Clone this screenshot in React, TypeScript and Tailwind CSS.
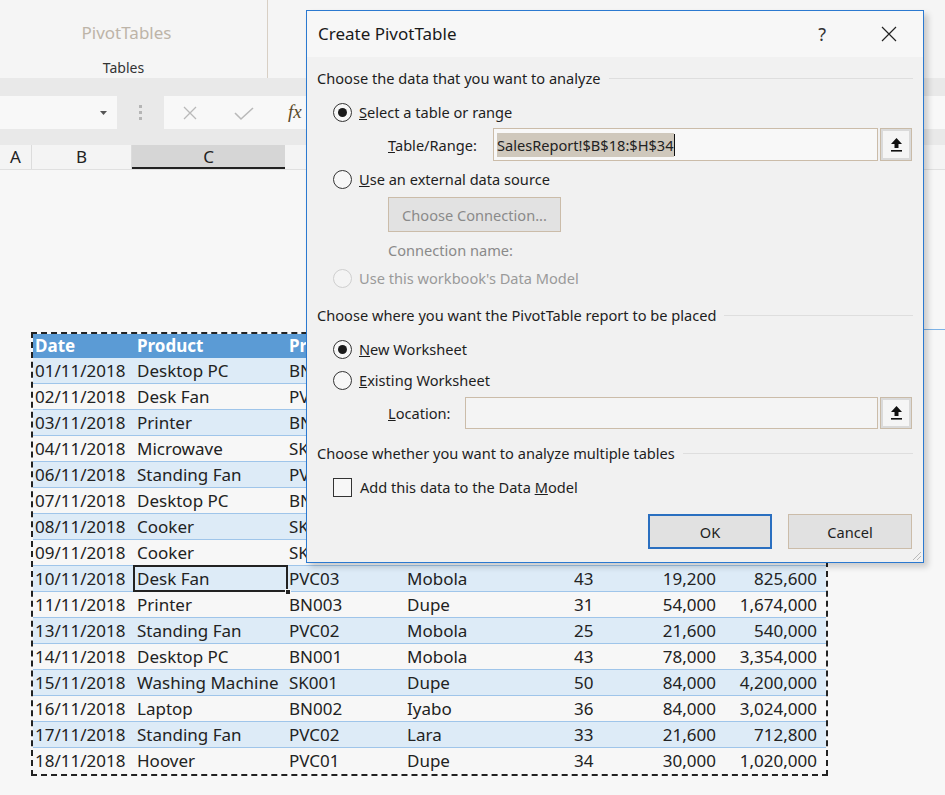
import React from 'react';

type Row = {
    date: string;
    product: string;
    id: string;
    seller: string;
    qty: number;
    price: string;
    total: string;
};

const rows: Row[] = [
    { date: '01/11/2018', product: 'Desktop PC', id: 'BN001', seller: 'Iyabo', qty: 12, price: '78,000', total: '936,000' },
    { date: '02/11/2018', product: 'Desk Fan', id: 'PVC03', seller: 'Lara', qty: 20, price: '19,200', total: '384,000' },
    { date: '03/11/2018', product: 'Printer', id: 'BN003', seller: 'Dupe', qty: 15, price: '54,000', total: '810,000' },
    { date: '04/11/2018', product: 'Microwave', id: 'SK002', seller: 'Mobola', qty: 18, price: '36,000', total: '648,000' },
    { date: '06/11/2018', product: 'Standing Fan', id: 'PVC02', seller: 'Iyabo', qty: 22, price: '21,600', total: '475,200' },
    { date: '07/11/2018', product: 'Desktop PC', id: 'BN001', seller: 'Lara', qty: 10, price: '78,000', total: '780,000' },
    { date: '08/11/2018', product: 'Cooker', id: 'SK003', seller: 'Dupe', qty: 14, price: '60,000', total: '840,000' },
    { date: '09/11/2018', product: 'Cooker', id: 'SK003', seller: 'Mobola', qty: 9, price: '60,000', total: '540,000' },
    { date: '10/11/2018', product: 'Desk Fan', id: 'PVC03', seller: 'Mobola', qty: 43, price: '19,200', total: '825,600' },
    { date: '11/11/2018', product: 'Printer', id: 'BN003', seller: 'Dupe', qty: 31, price: '54,000', total: '1,674,000' },
    { date: '13/11/2018', product: 'Standing Fan', id: 'PVC02', seller: 'Mobola', qty: 25, price: '21,600', total: '540,000' },
    { date: '14/11/2018', product: 'Desktop PC', id: 'BN001', seller: 'Mobola', qty: 43, price: '78,000', total: '3,354,000' },
    { date: '15/11/2018', product: 'Washing Machine', id: 'SK001', seller: 'Dupe', qty: 50, price: '84,000', total: '4,200,000' },
    { date: '16/11/2018', product: 'Laptop', id: 'BN002', seller: 'Iyabo', qty: 36, price: '84,000', total: '3,024,000' },
    { date: '17/11/2018', product: 'Standing Fan', id: 'PVC02', seller: 'Lara', qty: 33, price: '21,600', total: '712,800' },
    { date: '18/11/2018', product: 'Hoover', id: 'PVC01', seller: 'Dupe', qty: 34, price: '30,000', total: '1,020,000' },
];

// rows above this index sit behind the dialog from the Seller column on
const COVERED = 8;

const Radio: React.FC<{ checked?: boolean; disabled?: boolean }> = ({ checked, disabled }) => (
    <span
        className={`w-[19px] h-[19px] rounded-full border flex items-center justify-center shrink-0 ${disabled ? 'border-[#cfcfcf] bg-[#f4f4f4]' : 'border-[#333] bg-[#f7f7f7]'}`}
    >
        {checked && <span className="w-[9px] h-[9px] rounded-full bg-[#1a1a1a]" />}
    </span>
);

const PickButton: React.FC = () => (
    <div className="w-[32px] h-full border border-[#c9bba8] bg-[#dadada] p-[2px] shrink-0">
        <div className="w-full h-full bg-[#f5f5f5] flex items-center justify-center">
            <svg width="13" height="16" viewBox="0 0 13 16">
                <path d="M6.5 1 L12 7 H8.5 V11 H4.5 V7 H1 Z" fill="#111" />
                <rect x="1" y="13" width="11" height="1.6" fill="#111" />
            </svg>
        </div>
    </div>
);

const Heading: React.FC<{ text: string; className?: string }> = ({ text, className }) => (
    <div className={`flex items-center h-[24px] ${className ?? ''}`}>
        <span className="whitespace-nowrap">{text}</span>
        <div className="flex-1 h-px bg-[#dedede] ml-2 mr-[10px]" />
    </div>
);

const App: React.FC = () => {
    return (
        <div className="relative w-[945px] h-[795px] overflow-hidden bg-[#f7f7f7] text-[#222] font-['Noto_Sans',sans-serif]">
            {/* ribbon */}
            <div className="flex h-[78px] bg-[#f5f5f5]">
                <div className="w-[268px] flex flex-col items-center border-r border-[#d8cfc4]">
                    <span className="mt-[20px] ml-[-14px] text-[17px] text-[#bdb4a8] leading-[26px]">PivotTables</span>
                    <span className="mt-[12px] ml-[-20px] text-[14px] text-[#333] leading-[20px]">Tables</span>
                </div>
            </div>

            {/* formula bar */}
            <div className="h-[67px] bg-[#e9e9e9] pt-[18px]">
                <div className="flex items-center h-[33px]">
                    <div className="w-[117px] h-full bg-[#f8f8f8] flex items-center justify-end pr-[10px]">
                        <svg width="7" height="4" viewBox="0 0 7 4">
                            <path d="M0 0 H7 L3.5 4 Z" fill="#555" />
                        </svg>
                    </div>
                    <div className="w-[47px] flex flex-col items-center gap-[3px]">
                        <span className="w-[3px] h-[3px] bg-[#b5b5b5]" />
                        <span className="w-[3px] h-[3px] bg-[#b5b5b5]" />
                        <span className="w-[3px] h-[3px] bg-[#b5b5b5]" />
                    </div>
                    <div className="flex-1 h-full bg-[#f8f8f8] flex items-center">
                        <svg className="ml-[18px]" width="16" height="16" viewBox="0 0 16 16">
                            <path d="M2 2 L14 14 M14 2 L2 14" stroke="#b9b9b9" strokeWidth="1.3" />
                        </svg>
                        <svg className="ml-[36px]" width="20" height="16" viewBox="0 0 20 16">
                            <path d="M1 8 L7 14 L19 3" stroke="#b9b9b9" strokeWidth="1.6" fill="none" />
                        </svg>
                        <span className="ml-[34px] text-[19px] italic font-['Liberation_Serif',serif] text-[#5a4a2a]">fx</span>
                    </div>
                </div>
            </div>

            {/* column headers */}
            <div className="flex h-[25px] bg-[#f4f4f4] text-[17px] leading-[24px] border-b border-[#e0e0e0]">
                <div className="w-[32px] border-r border-[#dcdcdc] text-center">A</div>
                <div className="w-[100px] border-r border-[#dcdcdc] text-center">B</div>
                <div className="w-[153px] bg-[#d6d6d6] border-b-2 border-[#222] text-center">C</div>
                <div className="flex-1" />
            </div>

            {/* sheet */}
            <div className="relative">
                <div className="h-[162px] flex justify-end">
                    <div className="w-[22px] mt-[159px] h-px bg-[#7db2e6]" />
                </div>
                <div className="ml-[31px] w-[797px] border-2 border-dashed border-[#222] text-[17px] leading-[26px]">
                    <div className="flex h-[24px] items-center bg-[#5b9bd5] text-white font-bold leading-[22px]">
                        <div className="w-[101px] pl-[2px]">Date</div>
                        <div className="w-[153px] pl-[3px]">Product</div>
                        <div className="w-[116px] pl-[2px]">
                            <div className="w-[17px] overflow-hidden whitespace-nowrap">Product ID</div>
                        </div>
                        <div className="flex-1" />
                    </div>
                    {rows.map((r, i) => (
                        <div
                            key={r.date}
                            className={`flex h-[26px] items-center border-b border-[#9fc5ea] ${i % 2 === 0 ? 'bg-[#ddebf7]' : 'bg-[#f7f7f7]'} ${i === rows.length - 1 ? 'border-b-0' : ''}`}
                        >
                            <div className="w-[101px] pl-[2px] whitespace-nowrap">{r.date}</div>
                            <div className={`relative w-[153px] h-full pl-[3px] whitespace-nowrap ${i === 8 ? 'outline-2 outline-[#222] -outline-offset-1' : ''}`}>
                                {r.product}
                                {i === 8 && <span className="absolute right-[-4px] bottom-[-4px] w-[6px] h-[6px] bg-[#222] border border-[#f7f7f7]" />}
                            </div>
                            <div className="w-[116px] pl-[2px] overflow-hidden whitespace-nowrap">{i < COVERED ? r.id.slice(0, 2) : r.id}</div>
                            {i < COVERED ? (
                                <div className="flex-1" />
                            ) : (
                                <>
                                    <div className="w-[160px] pl-[4px]">{r.seller}</div>
                                    <div className="w-[80px] pl-[11px]">{r.qty}</div>
                                    <div className="w-[80px] text-right pr-[7px]">{r.price}</div>
                                    <div className="flex-1 text-right pr-[9px]">{r.total}</div>
                                </>
                            )}
                        </div>
                    ))}
                </div>
            </div>

            {/* dialog */}
            <div className="absolute left-[306px] top-[10px] w-[618px] h-[553px] border border-[#2b79d0] bg-[#f1f1f1] shadow-[4px_4px_6px_rgba(0,0,0,0.18)] flex flex-col text-[14.6px] text-[#1e1e1e] leading-[20px]">
                <div className="h-[46px] bg-[#f7f7f7] flex items-center pl-[11px]">
                    <span className="text-[17px] text-[#1a1a1a]">Create PivotTable</span>
                    <span className="ml-auto text-[18px] text-[#333] mr-[55px]">?</span>
                    <svg className="mr-[26px]" width="16" height="16" viewBox="0 0 16 16">
                        <path d="M1 1 L15 15 M15 1 L1 15" stroke="#222" strokeWidth="1.2" />
                    </svg>
                </div>

                <div className="flex flex-col pl-[10px]">
                    <Heading text="Choose the data that you want to analyze" className="mt-[9px]" />

                    <div className="flex items-center h-[24px] mt-[10px] pl-[16px] gap-[7px]">
                        <Radio checked />
                        <span><span className="underline">S</span>elect a table or range</span>
                    </div>

                    <div className="flex items-center h-[33px] mt-[4px] pl-[71px]">
                        <span className="w-[105px]"><span className="underline">T</span>able/Range:</span>
                        <div className="flex-1 h-full border border-[#cbbca9] bg-[#f8f8f8] flex items-center pl-[3px]">
                            <span className="bg-[#cfc8bc] text-[#222] leading-[24px]">SalesReport!$B$18:$H$34</span>
                            <span className="w-px h-[22px] bg-[#111]" />
                        </div>
                        <div className="ml-[2px] mr-[11px] h-full"><PickButton /></div>
                    </div>

                    <div className="flex items-center h-[24px] mt-[6px] pl-[16px] gap-[7px]">
                        <Radio />
                        <span><span className="underline">U</span>se an external data source</span>
                    </div>

                    <div className="ml-[71px] mt-[6px] w-[173px] h-[35px] border border-[#cbbca9] bg-[#e2e2e2] flex items-center justify-center text-[#8a8a8a]">
                        Choose Connection...
                    </div>

                    <div className="h-[24px] mt-[6px] pl-[71px] flex items-center text-[#8a8a8a]">Connection name:</div>

                    <div className="flex items-center h-[24px] mt-[4px] pl-[16px] gap-[7px] text-[#9a9a9a]">
                        <Radio disabled />
                        <span>Use this workbook's Data Model</span>
                    </div>

                    <Heading text="Choose where you want the PivotTable report to be placed" className="mt-[13px]" />

                    <div className="flex items-center h-[24px] mt-[10px] pl-[16px] gap-[7px]">
                        <Radio checked />
                        <span><span className="underline">N</span>ew Worksheet</span>
                    </div>

                    <div className="flex items-center h-[24px] mt-[7px] pl-[16px] gap-[7px]">
                        <Radio />
                        <span><span className="underline">E</span>xisting Worksheet</span>
                    </div>

                    <div className="flex items-center h-[32px] mt-[5px] pl-[71px]">
                        <span className="w-[77px]"><span className="underline">L</span>ocation:</span>
                        <div className="flex-1 h-full border border-[#cbbca9] bg-[#f4f4f4]" />
                        <div className="ml-[2px] mr-[11px] h-full"><PickButton /></div>
                    </div>

                    <Heading text="Choose whether you want to analyze multiple tables" className="mt-[12px]" />

                    <div className="flex items-center h-[24px] mt-[10px] pl-[16px] gap-[8px]">
                        <span className="w-[19px] h-[19px] border border-[#333] bg-[#f7f7f7]" />
                        <span>Add this data to the Data <span className="underline">M</span>odel</span>
                    </div>

                    <div className="flex justify-end gap-[16px] mt-[15px] mr-[11px]">
                        <div className="w-[124px] h-[35px] border-2 border-[#2a6fc0] bg-[#e1e1e1] flex items-center justify-center">OK</div>
                        <div className="w-[124px] h-[35px] border border-[#cbbca9] bg-[#e1e1e1] flex items-center justify-center">Cancel</div>
                    </div>
                </div>

                <svg className="absolute right-[1px] bottom-[1px]" width="12" height="12" viewBox="0 0 12 12">
                    <path d="M11 3 L3 11 M11 7 L7 11 M11 11 L11 11" stroke="#b9b9b9" strokeWidth="1" />
                </svg>
            </div>
        </div>
    );
};

export default App;
